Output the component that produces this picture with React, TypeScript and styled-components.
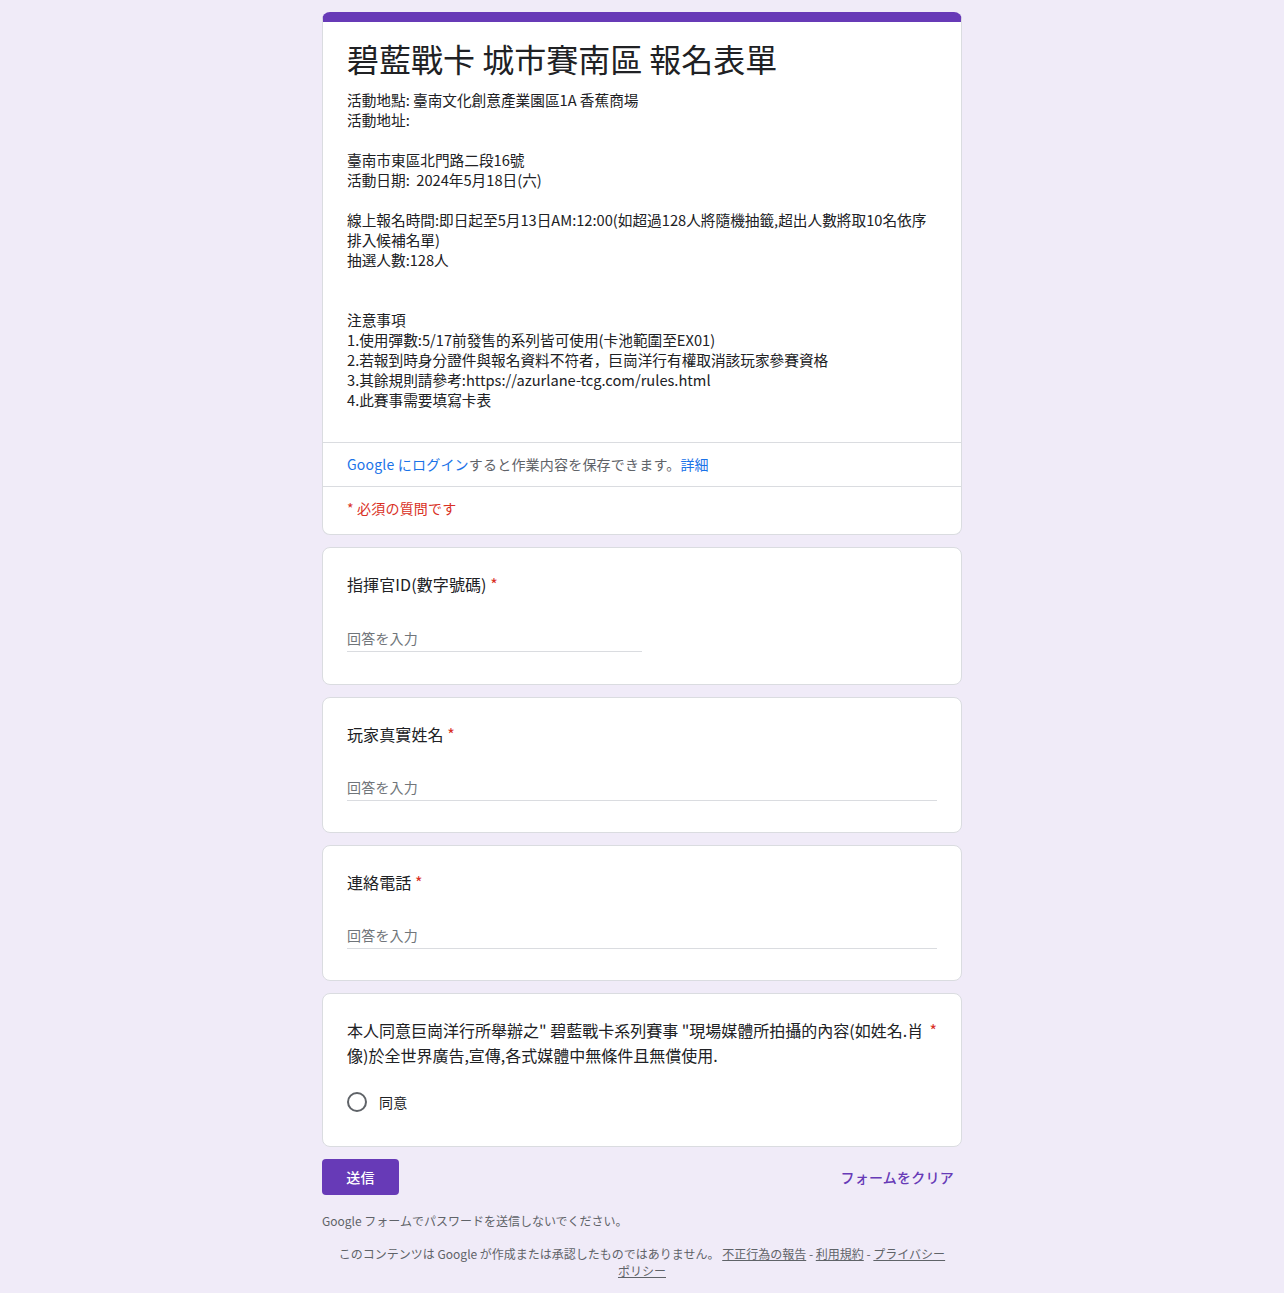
import React from 'react';
import styled, { createGlobalStyle } from 'styled-components';

const GlobalStyle = createGlobalStyle`
  body {
    margin: 0;
    background-color: #f0ebf8;
    font-family: 'Noto Sans CJK JP', 'Noto Sans CJK TC', 'Noto Sans', sans-serif;
    color: #202124;
  }
`;

const descriptionLines = [
  '活動地點: 臺南文化創意產業園區1A 香蕉商場',
  '活動地址:',
  '',
  '臺南市東區北門路二段16號',
  '活動日期:  2024年5月18日(六)',
  '',
  '線上報名時間:即日起至5月13日AM:12:00(如超過128人將隨機抽籤,超出人數將取10名依序排入候補名單)',
  '抽選人數:128人',
  '',
  '',
  '注意事項',
  '1.使用彈數:5/17前發售的系列皆可使用(卡池範圍至EX01)',
  '2.若報到時身分證件與報名資料不符者，巨崗洋行有權取消該玩家參賽資格',
  '3.其餘規則請參考:https://azurlane-tcg.com/rules.html',
  '4.此賽事需要填寫卡表',
];

interface TextQuestion {
  title: string;
  short: boolean;
}

const textQuestions: TextQuestion[] = [
  { title: '指揮官ID(數字號碼)', short: true },
  { title: '玩家真實姓名', short: false },
  { title: '連絡電話', short: false },
];

export default function App() {
  return (
    <>
      <GlobalStyle />
      <Page>
        <HeaderCard>
          <HeaderBody>
            <FormTitle>碧藍戰卡 城市賽南區 報名表單</FormTitle>
            <Description>
              {descriptionLines.map((line, i) => (
                <DescLine key={i}>{line || '\u00a0'}</DescLine>
              ))}
            </Description>
          </HeaderBody>
          <LoginRow>
            <Link>Google にログイン</Link>すると作業内容を保存できます。<Link>詳細</Link>
          </LoginRow>
          <RequiredNote>* 必須の質問です</RequiredNote>
        </HeaderCard>

        {textQuestions.map((q) => (
          <QuestionCard key={q.title} $bottom={q.short ? 32 : 31}>
            <QuestionTitle>
              {q.title}
              <Star> *</Star>
            </QuestionTitle>
            <AnswerInput $short={q.short}>回答を入力</AnswerInput>
          </QuestionCard>
        ))}

        <QuestionCard $bottom={32}>
          <WideTitle>
            <TitleText>
              本人同意巨崗洋行所舉辦之" 碧藍戰卡系列賽事 "現場媒體所拍攝的內容(如姓名.肖像)於全世界廣告,宣傳,各式媒體中無條件且無償使用.
            </TitleText>
            <Star>*</Star>
          </WideTitle>
          <RadioRow>
            <RadioCircle />
            <RadioLabel>同意</RadioLabel>
          </RadioRow>
        </QuestionCard>

        <ActionRow>
          <SubmitButton>送信</SubmitButton>
          <ClearButton>フォームをクリア</ClearButton>
        </ActionRow>

        <PasswordNote>Google フォームでパスワードを送信しないでください。</PasswordNote>
        <Disclaimer>
          このコンテンツは Google が作成または承認したものではありません。{' '}
          <FooterLink>不正行為の報告</FooterLink> - <FooterLink>利用規約</FooterLink> -{' '}
          <FooterLink>プライバシーポリシー</FooterLink>
        </Disclaimer>
      </Page>
    </>
  );
}

const Page = styled.div`
  width: 640px;
  margin: 0 auto;
  padding: 12px 0 24px;
  display: flex;
  flex-direction: column;
  gap: 12px;
`;

const Card = styled.div`
  background: #fff;
  border: 1px solid #dadce0;
  border-radius: 8px;
`;

const HeaderCard = styled(Card)`
  border-top: 10px solid #673ab7;
  overflow: hidden;
`;

const HeaderBody = styled.div`
  padding: 16px 24px 32px;
`;

const FormTitle = styled.h1`
  margin: 0;
  font-size: 32px;
  font-weight: 400;
  line-height: 40px;
  color: #202124;
`;

const Description = styled.div`
  margin-top: 12px;
  font-size: 14.67px;
  line-height: 20px;
  color: #202124;
`;

const DescLine = styled.div`
  white-space: pre-wrap;
`;

const LoginRow = styled.div`
  border-top: 1px solid #dadce0;
  border-bottom: 1px solid #dadce0;
  padding: 11px 24px 12px;
  font-size: 14px;
  line-height: 20px;
  letter-spacing: 0.2px;
  color: #5f6368;
`;

const Link = styled.span`
  color: #1a73e8;
`;

const RequiredNote = styled.div`
  padding: 11px 24px 16px;
  font-size: 14px;
  line-height: 20px;
  letter-spacing: 0.2px;
  color: #d93025;
`;

const QuestionCard = styled(Card)<{ $bottom: number }>`
  padding: 24px 24px ${(p) => p.$bottom}px;
`;

const QuestionTitle = styled.div`
  font-size: 16px;
  line-height: 24px;
  color: #202124;
  letter-spacing: 0.1px;
`;

const WideTitle = styled(QuestionTitle)`
  display: flex;
  gap: 4px;
  line-height: 25px;
  letter-spacing: 0;
`;

const TitleText = styled.div`
  flex: 1;
`;

const Star = styled.span`
  color: #d93025;
`;

const AnswerInput = styled.div<{ $short: boolean }>`
  margin-top: ${(p) => (p.$short ? 24 : 23)}px;
  width: ${(p) => (p.$short ? '295px' : '100%')};
  height: 32px;
  box-sizing: border-box;
  border-bottom: 1px solid #dadce0;
  font-size: 14px;
  line-height: 20px;
  letter-spacing: 0.2px;
  padding-top: 8px;
  color: #70757a;
`;

const RadioRow = styled.div`
  margin-top: 22px;
  display: flex;
  align-items: center;
  gap: 12px;
  height: 24px;
`;

const RadioCircle = styled.div`
  width: 20px;
  height: 20px;
  box-sizing: border-box;
  border: 2px solid #5f6368;
  border-radius: 50%;
`;

const RadioLabel = styled.span`
  font-size: 14px;
  letter-spacing: 0.2px;
  color: #202124;
`;

const ActionRow = styled.div`
  display: flex;
  justify-content: space-between;
  align-items: center;
`;

const SubmitButton = styled.button`
  width: 77px;
  height: 36px;
  border: none;
  border-radius: 4px;
  background: #673ab7;
  color: #fff;
  font-family: inherit;
  font-size: 14px;
  font-weight: 500;
  letter-spacing: 0.25px;
`;

const ClearButton = styled.button`
  border: none;
  background: transparent;
  color: #673ab7;
  font-family: inherit;
  font-size: 14px;
  font-weight: 500;
  letter-spacing: 0.25px;
  padding: 0 8px;
  height: 36px;
`;

const PasswordNote = styled.div`
  font-size: 12px;
  line-height: 16px;
  color: #5f6368;
  margin-top: 6px;
`;

const Disclaimer = styled.div`
  font-size: 12px;
  line-height: 17px;
  color: #5f6368;
  text-align: center;
  margin-top: 4px;
  padding: 0 16px;
`;

const FooterLink = styled.span`
  text-decoration: underline;
`;
